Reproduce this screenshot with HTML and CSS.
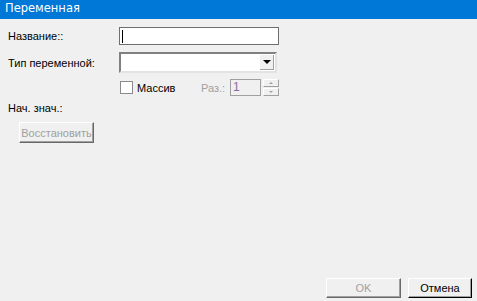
FILE: index.html
```html
<!DOCTYPE html>
<html lang="ru">
<head>
  <meta charset="UTF-8" />
  <title>Переменная</title>
  <link rel="stylesheet" href="styles.css">
</head>
<body>

<div class="dialog">
  <div class="titlebar">Переменная</div>

  <div class="form">
    <div class="row row-name">
      <label class="label">Название::</label>
      <div class="textbox"><span class="caret"></span></div>
    </div>
    <div class="row row-type">
      <label class="label">Тип переменной:</label>
      <div class="combo">
        <div class="combo-btn"><span class="arrow"></span></div>
      </div>
    </div>
    <div class="row row-array">
      <span class="check"></span>
      <span class="check-label">Массив</span>
      <span class="size-label">Раз.:</span>
      <div class="spin-input">1</div>
      <div class="spin">
        <div class="spin-btn"><span class="up"></span></div>
        <div class="spin-btn"><span class="down"></span></div>
      </div>
    </div>
    <div class="label init">Нач. знач.:</div>
    <button class="btn btn-restore" disabled>Восстановить</button>
  </div>

  <div class="footer">
    <button class="btn btn-ok" disabled>OK</button>
    <button class="btn btn-cancel">Отмена</button>
  </div>
</div>

</body>
</html>
```

FILE: styles.css
```css
body {
  margin: 0;
  background: #f0f0f0;
  font-family: 'Liberation Sans', Arial, sans-serif;
  font-size: 11px;
  color: #000;
}
.dialog {
  width: 477px;
  height: 301px;
  display: flex;
  flex-direction: column;
}
.titlebar {
  height: 19px;
  background: #0078d7;
  color: #fff;
  font-family: 'DejaVu Sans', sans-serif;
  font-size: 11.5px;
  line-height: 17px;
  padding-left: 5px;
}
.form {
  padding: 8px 0 0 8px;
}
.row {
  display: flex;
  align-items: center;
}
.label {
  width: 111px;
}
.textbox {
  width: 156px;
  height: 16px;
  border: 1px solid #6e6e6e;
  background: #fff;
  display: flex;
  align-items: center;
  padding-left: 2px;
}
.caret {
  width: 1px;
  height: 13px;
  background: #000;
}
.row-type {
  margin-top: 7px;
}
.combo {
  width: 154px;
  height: 15px;
  border: 2px solid;
  border-color: #808080 #e3e3e3 #e3e3e3 #808080;
  background: #fff;
  display: flex;
  justify-content: flex-end;
  align-items: center;
  padding: 1px 0;
}
.combo-btn {
  width: 14px;
  height: 15px;
  margin-right: 1px;
  background: #f0f0f0;
  border-right: 1px solid #a0a0a0;
  border-bottom: 1px solid #a0a0a0;
  box-sizing: border-box;
  display: flex;
  align-items: center;
  justify-content: center;
}
.arrow {
  border-left: 4px solid transparent;
  border-right: 4px solid transparent;
  border-top: 4px solid #000;
}
.row-array {
  margin-top: 6px;
  padding-left: 111px;
  height: 17px;
}
.check {
  width: 11px;
  height: 11px;
  border: 1px solid #8a8a8a;
  background: #fff;
  margin-left: 1px;
}
.check-label {
  margin-left: 4px;
  width: 64px;
}
.size-label {
  color: #a0a0a0;
  width: 29px;
}
.spin-input {
  width: 27px;
  height: 15px;
  border: 1px solid #a0a0a0;
  color: #8c6a9e;
  padding-left: 2px;
  line-height: 15px;
  font-size: 12px;
}
.spin {
  margin-left: 2px;
  display: flex;
  flex-direction: column;
  gap: 1px;
}
.spin-btn {
  width: 16px;
  height: 8px;
  box-sizing: border-box;
  border: 1px solid;
  border-color: #fff #a0a0a0 #a0a0a0 #fff;
  display: flex;
  align-items: center;
  justify-content: center;
}
.up {
  border-left: 2px solid transparent;
  border-right: 2px solid transparent;
  border-bottom: 2px solid #a0a0a0;
}
.down {
  border-left: 2px solid transparent;
  border-right: 2px solid transparent;
  border-top: 2px solid #a0a0a0;
}
.init {
  margin-top: 6px;
  width: auto;
}
.btn {
  font-family: 'Liberation Sans', Arial, sans-serif;
  font-size: 11px;
  background: #f0f0f0;
  border: 1px solid;
  border-color: #fff #696969 #696969 #fff;
  box-shadow: inset -1px -1px 0 #a0a0a0;
  padding: 0;
  color: #000;
}
.btn:disabled {
  color: #a0a0a0;
}
.btn-restore {
  margin: 8px 0 0 11px;
  width: 75px;
  height: 21px;
}
.footer {
  margin-top: auto;
  display: flex;
  justify-content: flex-end;
  gap: 7px;
  padding: 0 5px 3px 0;
}
.btn-ok {
  width: 75px;
  height: 20px;
}
.btn-cancel {
  width: 64px;
  height: 20px;
  border-color: #fff #000 #000 #fff;
}
```
